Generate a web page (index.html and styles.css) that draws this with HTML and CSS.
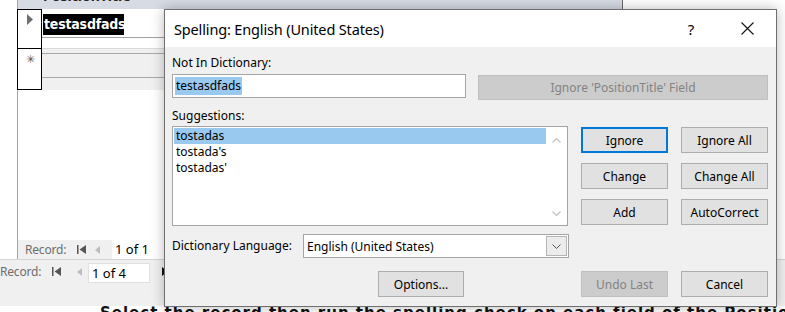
FILE: index.html
```html
<!DOCTYPE html>
<html>
<head>
<meta charset="utf-8">
<link rel="stylesheet" href="styles.css">
</head>
<body>
<div class="app">
  <div class="subform">
    <div class="sub-header"><span class="hdr-text">PositionTitle</span></div>
    <div class="sub-grid">
      <div class="selectors">
        <div class="sel sel-current">
          <svg class="rec-arrow" width="6" height="11" viewBox="0 0 6 11"><path d="M0 0 L6 5.5 L0 11 Z" fill="#6e6e6e"/></svg>
        </div>
        <div class="sel sel-new"><span class="star">✳</span></div>
      </div>
      <div class="cells">
        <div class="r1"><span class="cell-sel">testasdfads</span></div>
        <div class="r2"></div>
        <div class="r3"><div class="r3-line"></div></div>
      </div>
    </div>
    <div class="sub-blank"></div>
    <div class="nav nav-sub">
      <span class="nav-label">Record:</span>
      <svg class="nav-first" width="9" height="9" viewBox="0 0 9 9"><rect x="0" y="0" width="1.5" height="9" fill="#555"/><path d="M9 0 L2.5 4.5 L9 9 Z" fill="#555"/></svg>
      <svg class="nav-prev" width="5" height="8" viewBox="0 0 5 8"><path d="M5 0 L0 4 L5 8 Z" fill="#bdbdbd"/></svg>
      <span class="nav-box nav-box-sub">1 of 1</span>
    </div>
  </div>
  <div class="nav nav-main">
    <span class="nav-label">Record:</span>
    <svg class="nav-first" width="9" height="9" viewBox="0 0 9 9"><rect x="0" y="0" width="1.5" height="9" fill="#555"/><path d="M9 0 L2.5 4.5 L9 9 Z" fill="#555"/></svg>
    <svg class="nav-prev" width="5" height="8" viewBox="0 0 5 8"><path d="M5 0 L0 4 L5 8 Z" fill="#bdbdbd"/></svg>
    <span class="nav-box nav-box-main">1 of 4</span>
    <svg class="nav-next" width="6" height="9" viewBox="0 0 6 9"><path d="M0 0 L6 4.5 L0 9 Z" fill="#111"/></svg>
  </div>
  <div class="footer-band"></div>
  <div class="clip-text"><p>Select the record then run the spelling check on each field of the PositionTitle form when you finish the edits for it</p></div>
</div>

<div class="dialog">
  <div class="titlebar">
    <span class="title">Spelling: English (United States)</span>
    <span class="help">?</span>
    <svg class="close" width="13" height="13" viewBox="0 0 13 13"><path d="M0.5 0.5 L12.5 12.5 M12.5 0.5 L0.5 12.5" stroke="#111" stroke-width="1.1" fill="none"/></svg>
  </div>
  <div class="dbody">
    <div class="label lbl-nid">Not In Dictionary:</div>
    <div class="row row-nid">
      <div class="textbox"><span class="hl">testasdfads</span></div>
      <button class="btn disabled btn-field">Ignore 'PositionTitle' Field</button>
    </div>
    <div class="label lbl-sug">Suggestions:</div>
    <div class="row row-sug">
      <div class="listbox">
        <div class="items">
          <div class="item selected">tostadas</div>
          <div class="item">tostada's</div>
          <div class="item">tostadas'</div>
        </div>
        <div class="scrollbar">
          <svg width="9" height="5" viewBox="0 0 9 5"><path d="M0.5 4.5 L4.5 0.5 L8.5 4.5" stroke="#c2c2c2" stroke-width="1.2" fill="none"/></svg>
          <svg width="9" height="5" viewBox="0 0 9 5"><path d="M0.5 0.5 L4.5 4.5 L8.5 0.5" stroke="#c2c2c2" stroke-width="1.2" fill="none"/></svg>
        </div>
      </div>
      <div class="btn-grid">
        <button class="btn focused">Ignore</button>
        <button class="btn">Ignore All</button>
        <button class="btn">Change</button>
        <button class="btn">Change All</button>
        <button class="btn">Add</button>
        <button class="btn">AutoCorrect</button>
      </div>
    </div>
    <div class="row row-lang">
      <span class="label lbl-lang">Dictionary Language:</span>
      <div class="combo">
        <span class="combo-text">English (United States)</span>
        <span class="combo-btn"><svg width="9" height="5" viewBox="0 0 9 5"><path d="M0.5 0.5 L4.5 4.5 L8.5 0.5" stroke="#555" stroke-width="1" fill="none"/></svg></span>
      </div>
    </div>
    <div class="row row-bottom">
      <button class="btn btn-options">Options...</button>
      <button class="btn disabled btn-undo">Undo Last</button>
      <button class="btn btn-cancel">Cancel</button>
    </div>
  </div>
</div>
</body>
</html>
```
FILE: styles.css
```css
html, body {
  margin: 0;
  padding: 0;
  background: #fff;
}
body {
  width: 785px;
  height: 312px;
  overflow: hidden;
  position: relative;
  font-family: "Noto Sans", "Open Sans", sans-serif;
  font-size: 12px;
  color: #000;
}

/* ---------- background Access form ---------- */
.app {
  display: flex;
  flex-direction: column;
  width: 785px;
}
.subform {
  margin-left: 17px;
  width: 606px;
  height: 259px;
  border-left: 1px solid #a3a3a3;
  border-right: 1px solid #6a6a6a;
  display: flex;
  flex-direction: column;
  box-sizing: border-box;
}
.sub-header {
  height: 9px;
  background: #d6dbe4;
  overflow: hidden;
  position: relative;
}
.hdr-text {
  display: block;
  margin-top: -11px;
  margin-left: 25px;
  font-weight: bold;
  font-size: 14px;
  line-height: 14px;
  color: #222;
}
.sub-grid {
  display: flex;
  height: 81px;
}
.selectors {
  width: 25px;
  margin-left: -1px;
  border: 1px solid #000;
  box-sizing: border-box;
  display: flex;
  flex-direction: column;
  background: #fff;
}
.sel-current {
  height: 39px;
  border-bottom: 1px solid #000;
  display: flex;
  justify-content: center;
  padding-top: 4px;
  box-sizing: border-box;
  padding-left: 1px;
}
.sel-new {
  flex: 1;
  display: flex;
  justify-content: center;
  padding-left: 1px;
}
.star {
  font-size: 11px;
  line-height: 11px;
  margin-top: 4px;
  color: #555;
}
.cells {
  flex: 1;
  display: flex;
  flex-direction: column;
}
.r1 {
  height: 29px;
  border-bottom: 1px solid #a0a0a0;
  box-sizing: border-box;
  padding: 5px 0 0 1px;
}
.cell-sel {
  display: inline-block;
  background: #000;
  color: #fff;
  font-family: "DejaVu Sans Condensed", "DejaVu Sans", sans-serif;
  font-stretch: condensed;
  font-weight: bold;
  font-size: 14px;
  line-height: 21px;
  height: 21px;
  width: 81px;
  padding-left: 1px;
  box-sizing: border-box;
  letter-spacing: -0.2px;
}
.r2 {
  height: 10px;
}
.r3 {
  flex: 1;
  background: #f0f0f0;
  border-top: 1px solid #dadada;
  padding-top: 4px;
}
.r3-line {
  height: 23px;
  border-top: 1px solid #a8a8a8;
  border-bottom: 1px solid #a8a8a8;
}
.sub-blank {
  flex: 1;
}
.nav {
  display: flex;
  align-items: center;
  background: #f0f0f0;
  color: #6d6d6d;
}
.nav-label {
  font-size: 12px;
  letter-spacing: -0.2px;
}
.nav-box {
  background: #fff;
  color: #000;
  font-size: 13px;
  padding-left: 3px;
  box-sizing: border-box;
}
.nav-sub {
  height: 19px;
  padding-left: 7px;
}
.nav-sub .nav-label {
  width: 44px;
}
.nav-sub .nav-first {
  margin-left: 8px;
}
.nav-sub .nav-prev {
  margin-left: 9px;
}
.nav-box-sub {
  margin-left: 12px;
  width: 80px;
  height: 19px;
  line-height: 19px;
}
.nav-main {
  height: 24px;
  border-top: 1px solid #d4d4d4;
  box-sizing: border-box;
}
.nav-main .nav-label {
  width: 40px;
}
.nav-main .nav-first {
  margin-left: 12px;
}
.nav-main .nav-prev {
  margin-left: 16px;
}
.nav-box-main {
  margin-left: 6px;
  width: 62px;
  height: 20px;
  line-height: 18px;
  border: 1px solid #e0e0e0;
  align-self: flex-end;
}
.nav-next {
  margin-left: 12px;
}
.footer-band {
  height: 23px;
  background: #f0f0f0;
}
.clip-text {
  height: 6px;
  overflow: hidden;
  background: #fff;
}
.clip-text p {
  margin: -1px 0 0 100px;
  white-space: nowrap;
  font-family: "DejaVu Sans", sans-serif;
  font-weight: bold;
  font-size: 15px;
  line-height: 16px;
  letter-spacing: 1px;
  color: #111;
}

/* ---------- dialog ---------- */
.dialog {
  position: absolute;
  left: 164px;
  top: 9px;
  width: 613px;
  height: 298px;
  box-sizing: border-box;
  border: 1px solid #6f6f6f;
  background: #f0f0f0;
  box-shadow: 0 0 12px rgba(0, 0, 0, 0.28);
  display: flex;
  flex-direction: column;
}
.titlebar {
  height: 37px;
  background: #fff;
  display: flex;
  align-items: center;
  padding-left: 9px;
  flex-shrink: 0;
}
.title {
  flex: 1;
  font-size: 14.5px;
  letter-spacing: -0.15px;
}
.help {
  width: 20px;
  text-align: center;
  font-size: 15px;
  margin-right: 40px;
}
.close {
  margin-right: 22px;
}
.dbody {
  padding: 0 7px;
  display: flex;
  flex-direction: column;
}
.label {
  font-size: 12px;
  line-height: 16px;
}
.lbl-nid {
  margin-top: 8px;
}
.row {
  display: flex;
}
.row-nid {
  margin-top: 3px;
  height: 26px;
  align-items: flex-start;
}
.textbox {
  width: 294px;
  height: 24px;
  box-sizing: border-box;
  border: 1px solid #a5a5a5;
  background: #fff;
  padding: 2px 2px;
}
.hl {
  display: inline-block;
  background: #99c9ef;
  font-size: 12px;
  line-height: 18px;
  padding: 0 1px;
}
.btn {
  font-family: "Noto Sans", "Open Sans", sans-serif;
  font-size: 12px;
  color: #000;
  background: #e1e1e1;
  border: 1px solid #adadad;
  height: 26px;
  width: 87px;
  padding: 0;
  margin: 0;
  box-sizing: border-box;
}
.btn.disabled {
  background: #cccccc;
  border-color: #bfbfbf;
  color: #838383;
}
.btn.focused {
  border: 2px solid #0078d7;
}
.btn-field {
  margin-left: 12px;
  margin-top: 1px;
  width: 290px;
  height: 25px;
}
.lbl-sug {
  margin-top: 8px;
}
.row-sug {
  margin-top: 2px;
  height: 100px;
}
.listbox {
  width: 396px;
  height: 100px;
  box-sizing: border-box;
  border: 1px solid #a5a5a5;
  background: #fff;
  display: flex;
  padding: 1px;
}
.items {
  flex: 1;
}
.item {
  height: 16px;
  line-height: 16px;
  padding-left: 2px;
  font-size: 12px;
}
.item.selected {
  background: #99c9ef;
}
.scrollbar {
  width: 20px;
  display: flex;
  flex-direction: column;
  justify-content: space-between;
  align-items: center;
  padding: 10px 0 8px;
  box-sizing: border-box;
}
.btn-grid {
  margin-left: 13px;
  margin-top: 1px;
  display: grid;
  grid-template-columns: 87px 87px;
  grid-auto-rows: 26px;
  column-gap: 13px;
  row-gap: 10px;
}
.row-lang {
  margin-top: 8px;
  height: 24px;
  align-items: center;
}
.lbl-lang {
  width: 131px;
}
.combo {
  width: 266px;
  height: 24px;
  box-sizing: border-box;
  border: 1px solid #a5a5a5;
  background: #fff;
  display: flex;
  align-items: center;
  padding-left: 3px;
}
.combo-text {
  flex: 1;
  font-size: 12px;
}
.combo-btn {
  width: 21px;
  height: 20px;
  margin-right: 1px;
  box-sizing: border-box;
  border: 1px solid #b5b5b5;
  background: #ececec;
  display: flex;
  align-items: center;
  justify-content: center;
}
.row-bottom {
  margin-top: 13px;
}
.btn-options {
  margin-left: 206px;
  width: 86px;
}
.btn-undo {
  margin-left: 117px;
}
.btn-cancel {
  margin-left: 13px;
}
```
